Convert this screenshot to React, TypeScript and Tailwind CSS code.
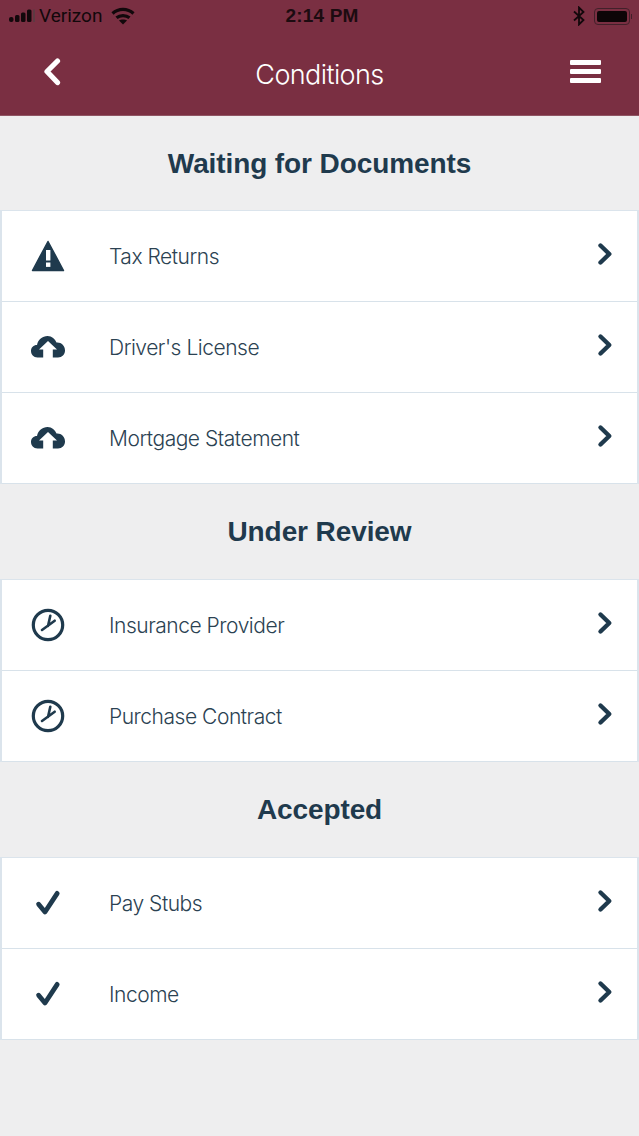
import React from "react";

const NAVY = "#1f3a4d";

function Warning() {
  return (
    <svg width="34" height="32" viewBox="0 0 34 32">
      <path d="M17 1.5 L32.5 30.5 H1.5 Z" fill={NAVY} stroke={NAVY} strokeWidth="1.5" strokeLinejoin="round" />
      <rect x="15" y="10" width="4.4" height="10.5" fill="#fff" />
      <rect x="15" y="22.5" width="4.4" height="4.4" fill="#fff" />
    </svg>
  );
}

function Cloud() {
  return (
    <svg width="36" height="24" viewBox="0 0 36 24">
      <path
        d="M7.5 22.5 C3.5 22.5 1 19.5 1 16 C1 12.5 3.5 10 7 10 C8 4.5 12.5 1 17.5 1 C22 1 25 4 26.5 7.5 C31 7 35 10.5 35 15.5 C35 19.5 32 22.5 28 22.5 H22.8 V14.5 H27 L18 6 L9 14.5 H13.2 V22.5 Z"
        fill={NAVY}
      />
    </svg>
  );
}

function Clock() {
  return (
    <svg width="34" height="34" viewBox="0 0 34 34" fill="none">
      <circle cx="17" cy="17" r="14.7" stroke={NAVY} strokeWidth="3.2" />
      <path d="M19.3 7.7 L17 18 M11 22 L23.7 12.7" stroke={NAVY} strokeWidth="2.6" strokeLinecap="round" />
    </svg>
  );
}

function Check() {
  return (
    <svg width="26" height="26" viewBox="0 0 26 26" fill="none">
      <path d="M3.6 14.2 L10 22 L22.2 3.4" stroke={NAVY} strokeWidth="4.8" strokeLinecap="round" strokeLinejoin="round" />
    </svg>
  );
}

function Chevron() {
  return (
    <svg width="16" height="24" viewBox="0 0 16 24" fill="none">
      <path d="M3.5 3.5 L12.3 12 L3.5 20.5" stroke={NAVY} strokeWidth="4.4" strokeLinecap="round" strokeLinejoin="round" />
    </svg>
  );
}

function Row({ icon, label }: { icon: React.ReactNode; label: string }) {
  return (
    <div className="flex h-[91px] items-center border-b border-[#d8e2ea]">
      <div className="flex w-[92px] shrink-0 justify-center">{icon}</div>
      <div className="ml-[15px] flex-1 pt-[2px] text-[21px] font-light tracking-[-0.47px] text-[#2b4252] [font-family:Inter,sans-serif]">
        {label}
      </div>
      <div className="mr-[24px] flex -translate-y-[2px]">
        <Chevron />
      </div>
    </div>
  );
}

function Section({
  title,
  items,
  titleClass,
}: {
  title: string;
  items: { icon: React.ReactNode; label: string }[];
  titleClass: string;
}) {
  return (
    <section>
      <h2 className={`flex items-center justify-center text-[28px] font-bold tracking-[-0.1px] text-[#1f3a4d] ${titleClass}`}>{title}</h2>
      <div className="border-x-2 border-t border-[#dbe4ec] bg-white">
        {items.map((it) => (
          <Row key={it.label} icon={it.icon} label={it.label} />
        ))}
      </div>
    </section>
  );
}

export default function App() {
  return (
    <div
      className="h-[1136px] w-[639px] overflow-hidden bg-[#eeeeef]"
      style={{ fontFamily: '"Liberation Sans", Arial, sans-serif' }}
    >
      <header className="h-[116px] border-b border-[#8f5563] bg-[#7a2f42]">
        <div className="relative flex h-[32px] items-center justify-between pl-[9px] pr-[7px] text-[#12080b]">
          <div className="flex items-center">
            <svg width="26" height="14" viewBox="0 0 26 14" fill="#12080b">
              <rect x="0" y="8" width="4.5" height="5" rx="2" />
              <rect x="6" y="6" width="4.5" height="7" rx="1.5" />
              <rect x="12" y="3.5" width="4.5" height="9.5" rx="1.5" />
              <rect x="18" y="0.5" width="4.5" height="12.5" rx="1.5" />
              <rect x="24" y="0.5" width="2" height="12.5" fill="#5d3a42" />
            </svg>
            <span className="ml-[4px] text-[19px] font-normal [font-family:Roboto,sans-serif]">Verizon</span>
            <svg className="ml-[9px]" width="24" height="18" viewBox="0 0 24 18" fill="none" stroke="#12080b" strokeWidth="3.2">
              <path d="M1.5 6.5 C7.5 1 16.5 1 22.5 6.5" />
              <path d="M5.5 10.8 C9 7.8 15 7.8 18.5 10.8" />
              <path d="M12 17.5 L8 13.6 C10 12.2 14 12.2 16 13.6 Z" fill="#12080b" stroke="none" />
            </svg>
          </div>
          <span className="absolute left-[5px] right-0 text-center text-[19px] font-bold tracking-[0.2px] opacity-90">2:14 PM</span>
          <div className="flex items-center gap-[9px]">
            <svg width="12" height="20" viewBox="0 0 12 20" fill="none" stroke="#12080b" strokeWidth="1.8">
              <path d="M1 5.5 L10.5 14 L6 18.5 V1.5 L10.5 6 L1 14.5" />
            </svg>
            <div className="flex items-center">
              <div className="flex h-[17px] w-[36px] items-center rounded-[4px] border border-[#42202a] p-[2px]">
                <div className="h-full w-full rounded-[2px] bg-[#0d0507]" />
              </div>
              <div className="ml-[1px] h-[5px] w-[1.5px] bg-[#42202a]" />
            </div>
          </div>
        </div>
        <div className="relative flex h-[83px] items-center justify-between pl-[43px] pr-[38px]">
          <svg width="18" height="28" viewBox="0 0 18 28" fill="none" className="-translate-y-[2px]">
            <path d="M14.5 3 L4 13.5 L14.5 24.5" stroke="#fff" strokeWidth="5.2" strokeLinecap="round" strokeLinejoin="round" />
          </svg>
          <span className="absolute left-0 right-0 pt-[4px] text-center text-[27px] font-light tracking-[-0.6px] text-white [font-family:Inter,sans-serif]">
            Conditions
          </span>
          <div className="flex -translate-y-[2px] flex-col gap-[4px]">
            <div className="h-[5px] w-[31px] rounded-[1px] bg-white" />
            <div className="h-[5px] w-[31px] rounded-[1px] bg-white" />
            <div className="h-[5px] w-[31px] rounded-[1px] bg-white" />
          </div>
        </div>
      </header>
      <Section
        title="Waiting for Documents"
        titleClass="h-[94px] pt-[1px]"
        items={[
          { icon: <Warning />, label: "Tax Returns" },
          { icon: <Cloud />, label: "Driver's License" },
          { icon: <Cloud />, label: "Mortgage Statement" },
        ]}
      />
      <Section
        title="Under Review"
        titleClass="h-[95px]"
        items={[
          { icon: <Clock />, label: "Insurance Provider" },
          { icon: <Clock />, label: "Purchase Contract" },
        ]}
      />
      <Section
        title="Accepted"
        titleClass="h-[95px]"
        items={[
          { icon: <Check />, label: "Pay Stubs" },
          { icon: <Check />, label: "Income" },
        ]}
      />
    </div>
  );
}
